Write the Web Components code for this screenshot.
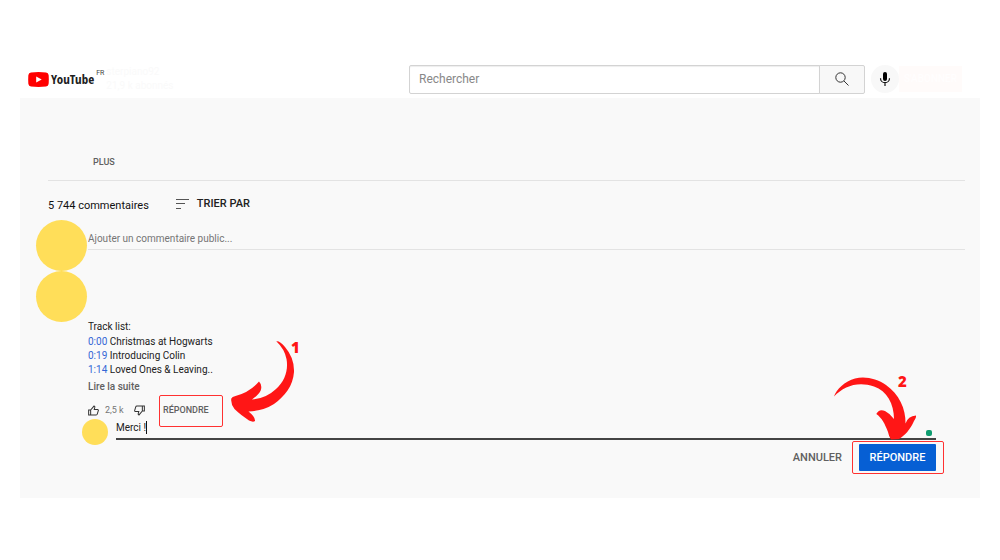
<!DOCTYPE html>
<html lang="fr">
<head>
<meta charset="utf-8">
<meta name="viewport" content="width=device-width, initial-scale=1">
<title>YouTube - Répondre à un commentaire</title>
<style>
  body { margin: 0; background: #fff; color: #212121; font-family: Roboto, "Liberation Sans", sans-serif; font-size: 10px; line-height: 14px; }
</style>
</head>
<body>
<yt-app></yt-app>
<script>
const define = (name, html) => {
  const template = document.createElement('template');
  template.innerHTML = html;
  customElements.define(name, class extends HTMLElement {
    constructor() {
      super();
      this.attachShadow({ mode: 'open' }).append(template.content.cloneNode(true));
    }
  });
};

define('yt-logo', `
<style>
  :host { display: flex; align-items: center; gap: 2px; }
  a { display: flex; align-items: center; gap: 2px; color: #212121; text-decoration: none; font: bold 13px/20px "Liberation Sans Narrow", "Open Sans Condensed", Roboto, sans-serif; }
  sup { align-self: flex-start; font-size: 7px; line-height: 8px; color: #444; }
  svg { display: block; }
</style>
<a href="#"><svg width="21" height="15" viewBox="0 0 21 15" aria-hidden="true"><path d="M3 .4Q10.500-.2 18 .4Q20.300.6 20.600 3Q21 7.500 20.600 12Q20.300 14.400 18 14.600Q10.500 15.200 3 14.600Q.7 14.400.4 12Q0 7.500.4 3Q.7.6 3 .4Z" fill="#f00"/><path d="M8.200 4.400v6.200L13.700 7.500z" fill="#fff"/></svg><span>YouTube</span></a>
<sup>FR</sup>`);

define('yt-channel-hint', `
<style>
  :host { display: block; color: #fafafa; font-size: 10px; line-height: 14px; }
</style>
<div><slot name="name"></slot></div><div><slot name="count"></slot></div>`);

define('yt-search', `
<style>
  :host { display: block; }
  form { display: flex; margin: 0; height: 29px; }
  input { flex: 1; min-width: 0; box-sizing: border-box; border: 1px solid #d3d3d3; border-radius: 2px 0 0 2px; padding: 0 9px; background: #fff; font: 12px/16px Roboto, sans-serif; color: #212121; outline: 0; box-shadow: inset 0 1px 1px #eee; }
  input::placeholder { color: #888; opacity: 1; }
  button { width: 46px; box-sizing: border-box; margin-left: -1px; padding: 0; display: grid; place-items: center; border: 1px solid #d3d3d3; border-radius: 0 2px 2px 0; background: #f8f8f8; }
</style>
<form onsubmit="return false"><input type="search" placeholder="Rechercher" aria-label="Rechercher"><button aria-label="Lancer la recherche"><svg width="14" height="14" viewBox="0 0 14 14" fill="none" stroke="#333" stroke-width="1"><circle cx="5.500" cy="5.500" r="4.700"/><path d="M9 9l4.500 4.500"/></svg></button></form>`);

define('yt-mic', `
<style>
  :host { display: block; }
  button { width: 28px; height: 28px; border: 0; border-radius: 50%; background: #f8f8f8; padding: 0; display: grid; place-items: center; }
</style>
<button aria-label="Recherche vocale"><svg width="12" height="14" viewBox="0 0 12 14"><rect x="4" y="0" width="4" height="9" rx="2" fill="#000"/><path d="M1.500 6.200a4.500 4.500 0 0 0 9 0M6 10.700V14" fill="none" stroke="#111" stroke-width="1.200"/></svg></button>`);

define('yt-header', `
<style>
  :host { display: grid; grid-template-columns: 389fr 456fr 115fr; height: 38px; align-items: center; }
  .brand { display: flex; align-items: center; padding-left: 8px; gap: 2px; }
  .tools { display: flex; align-items: center; padding-left: 6px; }
  .sub { flex: 1; height: 26px; margin: 0 18px 0 0; padding: 0; border: 0; background: #fffbfa; color: #fffefe; font: 500 10px/14px Roboto, sans-serif; }
</style>
<div class="brand"><yt-logo></yt-logo><slot></slot></div>
<yt-search></yt-search>
<div class="tools"><yt-mic></yt-mic><button class="sub">S'ABONNER</button></div>`);

define('yt-avatar', `
<style>
  :host { display: block; flex: none; width: 51px; height: 51px; border-radius: 50%; background: #ffde59; }
  :host([small]) { width: 26px; height: 26px; }
</style>`);

define('yt-marker', `
<style>
  :host { position: relative; display: block; }
  .frame { position: absolute; inset: var(--frame-inset); border: 1px solid #ff3131; border-radius: 2px; pointer-events: none; }
  ::slotted([slot=arrow]) { position: absolute; pointer-events: none; z-index: 1; }
</style>
<slot></slot><div class="frame"></div><slot name="arrow"></slot>`);

define('yt-arrow', `
<style>
  :host { display: block; width: 90px; height: 90px; font: 800 15px/16px "Open Sans", sans-serif; color: #ff1616; }
  svg { display: none; }
  :host([step="1"]) .a, :host([step="2"]) .b { display: block; }
  span { position: absolute; }
  :host([step="1"]) span { left: 71px; top: 9px; }
  :host([step="2"]) span { left: 68px; top: 3px; }
</style>
<svg class="a" width="90" height="94" viewBox="0 0 90 94" fill="#ff1616"><path d="M56.300 11.300Q60 10.800 65 17Q74.500 28 74 42C73 56 65 66 54 74Q43 81 28.500 81.500Q35.500 87 35 91Q33 92.500 29 90.500C24 87 18.500 83 14.500 79Q10.500 74 11.300 68.500Q12 66.500 15.500 66Q30 62 39 51.500Q42.500 55 40.700 60.500Q39 64.500 32 69.500Q46 68.500 56 59C65 51 68.500 40 66.500 29Q64.500 19 56.300 11.300Z"/></svg>
<svg class="b" width="90" height="70" viewBox="0 0 90 70" fill="#ff1616"><path d="M4 26.500C6 20 15 11 25 8.500C36 6 47 9 56 15C69 24 76 39 75.500 53.500Q78 46 86 45.500Q86.500 47 84 51C80 60 75 65 69 69L61 69.500Q59 67 58 62C55 54 52 48 46.300 44Q49 38.500 55 41Q60 43.500 64 49C64 34 57 21 44 16.500C28 11 14 16 4 26.500Z"/></svg>
<span><slot></slot></span>`);

define('yt-button', `
<style>
  :host { display: block; }
  button { display: block; border: 0; border-radius: 1px; margin: 0; padding: 0; background: none; color: #606060; font: 500 var(--size, 9px)/14px Roboto, sans-serif; white-space: nowrap; }
  :host([primary]) button { background: #065fd4; color: #fff; height: 27px; width: 77px; }
</style>
<button><slot></slot></button>`);

define('yt-composer', `
<style>
  :host { display: flex; gap: 1px; }
  label { flex: 1; display: block; padding-top: 12px; height: 17px; border-bottom: 1px solid #e3e3e3; }
  input { display: block; width: 100%; height: 14px; padding: 0; border: 0; outline: 0; background: none; font: 10px/14px Roboto, sans-serif; }
  input::placeholder { color: #757575; opacity: 1; }
</style>
<yt-avatar></yt-avatar><label><input aria-label="Ajouter un commentaire public" placeholder="Ajouter un commentaire public..."></label>`);

define('yt-reply', `
<style>
  :host { display: block; margin: 2px 29px 0 -6px; }
  .row { display: flex; gap: 8px; height: 25px; }
  .field { flex: 1; display: flex; height: 14px; padding: 2px 4px 3px 0; border-bottom: 2px solid #444; }
  input { flex: none; field-sizing: content; min-width: 28px; height: 14px; padding: 0; border: 0; outline: 0; background: none; color: #212121; font: 10px/14px Roboto, sans-serif; }
  i { width: 1px; height: 13px; background: #111; }
  b { width: 6px; height: 6px; border-radius: 2px; margin: 9px 0 0 auto; background: #0f9d70; }
  .buttons { display: flex; justify-content: flex-end; align-items: center; gap: 17px; --size: 11px; }
  yt-marker { --frame-inset: -3px -8px -3px -7px; }
  yt-arrow { left: -29px; top: -74px; }
</style>
<div class="row"><yt-avatar small></yt-avatar><div class="field"><input value="Merci !" aria-label="Votre réponse"><i></i><b></b></div></div>
<div class="buttons"><yt-button>ANNULER</yt-button><yt-marker><yt-button primary>RÉPONDRE</yt-button><yt-arrow slot="arrow" step="2">2</yt-arrow></yt-marker></div>`);

define('yt-comment', `
<style>
  :host { display: flex; gap: 1px; }
  .body { flex: 1; padding-top: 49px; }
  .actions { display: flex; align-items: center; height: 14px; margin-top: 9px; color: #757575; font-size: 9px; }
  .icon { border: 0; padding: 0; background: none; width: 11px; height: 11px; }
  .icon svg { display: block; }
  .count { width: 29px; margin-left: 6px; }
  yt-marker { --frame-inset: -8px -14px -10px -4px; margin-left: 18px; }
  yt-arrow { left: 57px; top: -73px; }
  .more { margin-top: 3px; --size: 10px; }
</style>
<yt-avatar></yt-avatar>
<div class="body">
  <slot></slot>
  <yt-button class="more">Lire la suite</yt-button>
  <div class="actions">
    <button class="icon" aria-label="J'aime"><svg width="11" height="11" viewBox="0 0 12 12" fill="none" stroke="#333" stroke-width="1.100"><path d="M.7 5.500h2.200v5.300H.7zM2.900 5.500L6.500 1.200Q7.700 1.300 7.400 2.700L6.800 4.800h3.700q1 .2.8 1.200l-1.200 4q-.3.800-1.200.8H2.900"/></svg></button>
    <span class="count">2,5 k</span>
    <button class="icon" aria-label="Je n'aime pas"><svg width="11" height="11" viewBox="0 0 12 12" fill="none" stroke="#333" stroke-width="1.100"><path d="M11.300 6.500H9.100V1.200h2.200zM9.100 6.500L5.500 10.800Q4.300 10.700 4.600 9.300L5.200 7.200H1.500q-1-.2-.8-1.200l1.200-4q.3-.8 1.200-.8h6"/></svg></button>
    <yt-marker><yt-button>RÉPONDRE</yt-button><yt-arrow slot="arrow" step="1">1</yt-arrow></yt-marker>
  </div>
  <yt-reply></yt-reply>
</div>`);

define('yt-track-list', `
<style>
  :host { display: block; }
  p, ul { margin: 0; padding: 0; list-style: none; }
  ul { margin-top: 1px; }
  a { color: #3467d6; text-decoration: none; }
</style>
<p>Track list:</p>
<ul><li><a href="#t=0">0:00</a> Christmas at Hogwarts</li><li><a href="#t=19">0:19</a> Introducing Colin</li><li><a href="#t=74">1:14</a> Loved Ones &amp; Leaving..</li></ul>`);

define('yt-comments', `
<style>
  :host { display: block; background: #f9f9f9; padding: 57px 15px 27px 16px; }
  .plus { margin-left: 57px; }
  .head { display: flex; align-items: center; height: 24px; margin: 11px 0 4px 12px; padding-top: 11px; border-top: 1px solid #e3e3e3; }
  h2 { margin: 3px 0 0; font: 11px/16px Roboto, sans-serif; color: #111; }
  .sort { display: flex; align-items: center; gap: 8px; margin: 0 0 0 27px; padding: 0; border: 0; background: none; color: #212121; font: 500 11px/14px Roboto, sans-serif; }
</style>
<yt-button class="plus">PLUS</yt-button>
<div class="head"><h2>5 744 commentaires</h2><button class="sort"><svg width="13" height="10" viewBox="0 0 13 10" fill="#555"><path d="M0 0h13v1H0zM0 4h9v1H0zM0 9h5v1H0z"/></svg>TRIER PAR</button></div>
<yt-composer></yt-composer>
<yt-comment><yt-track-list></yt-track-list></yt-comment>`);

define('yt-app', `
<style>
  :host { display: block; padding: 60px 20px; }
</style>
<yt-header><yt-channel-hint><span slot="name">sterpiano92</span><span slot="count">21,9 k abonnés</span></yt-channel-hint></yt-header>
<main><yt-comments></yt-comments></main>`);
</script>
</body>
</html>
